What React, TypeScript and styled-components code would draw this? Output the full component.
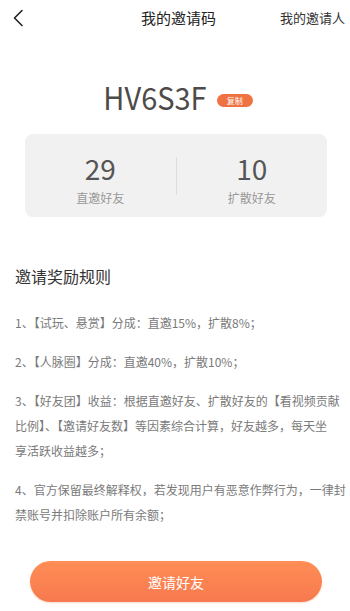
import React from "react";
import styled, { createGlobalStyle } from "styled-components";

const Global = createGlobalStyle`
  html, body { margin: 0; padding: 0; background: #fff; }
  body { font-family: "Noto Sans CJK SC", "Noto Sans", sans-serif; }
  * { box-sizing: border-box; }
`;

const Page = styled.div`
  width: 350px;
  height: 611px;
  background: #fff;
  display: flex;
  flex-direction: column;
  overflow: hidden;
`;

const Header = styled.div`
  height: 35px;
  display: grid;
  grid-template-columns: 70px 1fr 70px;
  align-items: center;
  padding: 0 5px 0 12px;
`;

const Back = styled.div`
  display: flex;
  align-items: center;
`;

const Title = styled.div`
  text-align: center;
  font-size: 15px;
  color: #222;
`;

const Right = styled.div`
  text-align: right;
  font-size: 13px;
  color: #333;
  white-space: nowrap;
`;

const CodeRow = styled.div`
  margin-top: 43px;
  display: flex;
  align-items: center;
  justify-content: center;
  gap: 10px;
  padding-left: 6px;
`;

const Code = styled.div`
  font-family: "Noto Sans CJK SC", sans-serif;
  font-size: 29px;
  line-height: 36px;
  color: #4e4a4a;
  transform: scaleY(1.06);
`;

const Badge = styled.div`
  width: 36px;
  height: 13px;
  border-radius: 7px;
  background: #ee7242;
  color: #fff;
  font-size: 8px;
  line-height: 13px;
  text-align: center;
  margin-top: 8px;
`;

const StatsCard = styled.div`
  margin: 20px 23px 0 25px;
  height: 83px;
  background: #f2f1f1;
  border-radius: 8px;
  display: grid;
  grid-template-columns: 1fr 1px 1fr;
  align-items: center;
`;

const Stat = styled.div`
  display: flex;
  flex-direction: column;
  align-items: center;
  align-self: start;
  padding-top: 18px;
`;

const Num = styled.div`
  font-family: "Noto Sans CJK SC", sans-serif;
  font-size: 28px;
  line-height: 32px;
  color: #555;
`;

const Label = styled.div`
  margin-top: 6px;
  font-size: 12px;
  line-height: 16px;
  color: #999;
`;

const Divider = styled.div`
  width: 1px;
  height: 38px;
  background: #ddd;
`;

const Rules = styled.div`
  margin-top: 47px;
  padding: 0 15px;
`;

const RulesTitle = styled.div`
  font-size: 16px;
  line-height: 24px;
  color: #333;
  margin-bottom: 22px;
`;

const Item = styled.div`
  font-size: 12px;
  line-height: 25px;
  color: #7a7a7a;
  white-space: nowrap;
  margin-bottom: 14px;
`;

const Footer = styled.div`
  margin-top: auto;
  padding: 0 28px 9px 30px;
`;

const InviteButton = styled.button`
  width: 100%;
  height: 41px;
  border: none;
  border-radius: 21px;
  background: linear-gradient(180deg, #ff8d55 0%, #f7794f 100%);
  color: #fff;
  font-family: "Noto Sans CJK SC", sans-serif;
  font-size: 14px;
  box-shadow: 0 1px 2px rgba(230, 110, 60, 0.25);
`;

export default function App() {
  return (
    <Page>
      <Global />
      <Header>
        <Back>
          <svg width="12" height="18" viewBox="0 0 12 18" fill="none">
            <path d="M10 1.5 L2.5 9 L10 16.5" stroke="#222" strokeWidth="1.6" strokeLinecap="round" strokeLinejoin="round" />
          </svg>
        </Back>
        <Title>我的邀请码</Title>
        <Right>我的邀请人</Right>
      </Header>
      <CodeRow>
        <Code>HV6S3F</Code>
        <Badge>复制</Badge>
      </CodeRow>
      <StatsCard>
        <Stat>
          <Num>29</Num>
          <Label>直邀好友</Label>
        </Stat>
        <Divider />
        <Stat>
          <Num>10</Num>
          <Label>扩散好友</Label>
        </Stat>
      </StatsCard>
      <Rules>
        <RulesTitle>邀请奖励规则</RulesTitle>
        <Item>1、【试玩、悬赏】分成：直邀15%，扩散8%；</Item>
        <Item>2、【人脉圈】分成：直邀40%，扩散10%；</Item>
        <Item>
          3、【好友团】收益：根据直邀好友、扩散好友的【看视频贡献<br />
          比例】、【邀请好友数】等因素综合计算，好友越多，每天坐<br />
          享活跃收益越多；
        </Item>
        <Item>
          4、官方保留最终解释权，若发现用户有恶意作弊行为，一律封<br />
          禁账号并扣除账户所有余额；
        </Item>
      </Rules>
      <Footer>
        <InviteButton>邀请好友</InviteButton>
      </Footer>
    </Page>
  );
}
